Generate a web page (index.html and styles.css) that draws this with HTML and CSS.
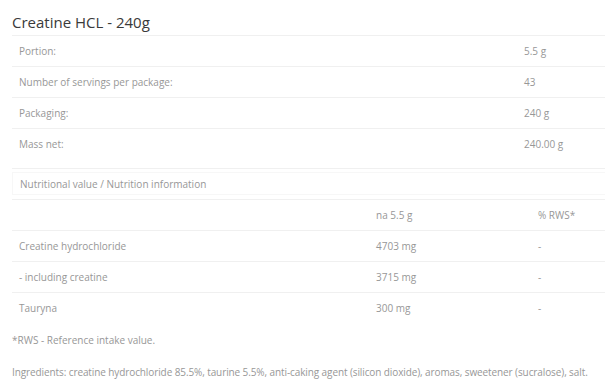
FILE: index.html
```html
<!DOCTYPE html>
<html lang="en">
<head>
    <meta charset="UTF-8">
    <meta name="viewport" content="width=device-width, initial-scale=1.0">
    <title>Creatine HCL - 240g</title>
    <link rel="stylesheet" href="styles.css">
</head>
<body>

    <div class="product-info">
        <h2 class="product-title">Creatine HCL - 240g</h2>

        <!-- Basic specs -->
        <table class="specs">
            <colgroup>
                <col class="col-label">
                <col>
            </colgroup>
            <tr>
                <td>Portion:</td>
                <td>5.5 g</td>
            </tr>
            <tr>
                <td>Number of servings per package:</td>
                <td>43</td>
            </tr>
            <tr>
                <td>Packaging:</td>
                <td>240 g</td>
            </tr>
            <tr class="last">
                <td>Mass net:</td>
                <td>240.00 g</td>
            </tr>
        </table>

        <!-- Nutrition -->
        <div class="nutrition-head">Nutritional value / Nutrition information</div>
        <table class="nutrition">
            <colgroup>
                <col class="col-name">
                <col class="col-amount">
                <col>
            </colgroup>
            <tr>
                <td></td>
                <td>na 5.5 g</td>
                <td>% RWS*</td>
            </tr>
            <tr>
                <td>Creatine hydrochloride</td>
                <td>4703 mg</td>
                <td>-</td>
            </tr>
            <tr>
                <td>- including creatine</td>
                <td>3715 mg</td>
                <td>-</td>
            </tr>
            <tr>
                <td>Tauryna</td>
                <td>300 mg</td>
                <td>-</td>
            </tr>
        </table>

        <p class="note">*RWS - Reference intake value.</p>
        <p class="ingredients">Ingredients: creatine hydrochloride 85.5%, taurine 5.5%, anti-caking agent (silicon dioxide), aromas, sweetener (sucralose), salt.</p>
    </div>

</body>
</html>
```
FILE: styles.css
```css
body {
    font-family: "Open Sans", Arial, sans-serif;
    background-color: #fff;
    color: #979797;
    margin: 0;
    padding: 0;
}
.product-info {
    padding: 12px 0 0 12px;
}
.product-title {
    font-size: 15px;
    font-weight: normal;
    line-height: 20px;
    color: #3a3a3a;
    margin: 0 0 3px 0;
}
table {
    width: 100%;
    border-collapse: collapse;
    table-layout: fixed;
    font-size: 10px;
}
td {
    padding: 7px 7px;
    line-height: 16px;
    text-align: left;
}
.specs {
    border-top: 1px solid #f0f0f0;
}
.specs tr {
    border-bottom: 1px solid #f0f0f0;
}
.col-label {
    width: 505px;
}
.specs tr.last td {
    padding-bottom: 16px;
}
.nutrition-head {
    font-size: 10px;
    line-height: 16px;
    padding: 3px 7px 2px 7px;
    margin-top: 3px;
    border: 1px solid #f7f7f7;
    border-right: none;
}
.nutrition {
    margin-top: 4px;
}
.nutrition tr {
    border-top: 1px solid #f0f0f0;
}
.col-name {
    width: 357px;
}
.col-amount {
    width: 162px;
}
.note {
    font-size: 10px;
    line-height: 16px;
    margin: 9px 0 0 0;
}
.ingredients {
    font-size: 10px;
    letter-spacing: -0.1px;
    line-height: 16px;
    margin: 16px 0 0 0;
}
```
